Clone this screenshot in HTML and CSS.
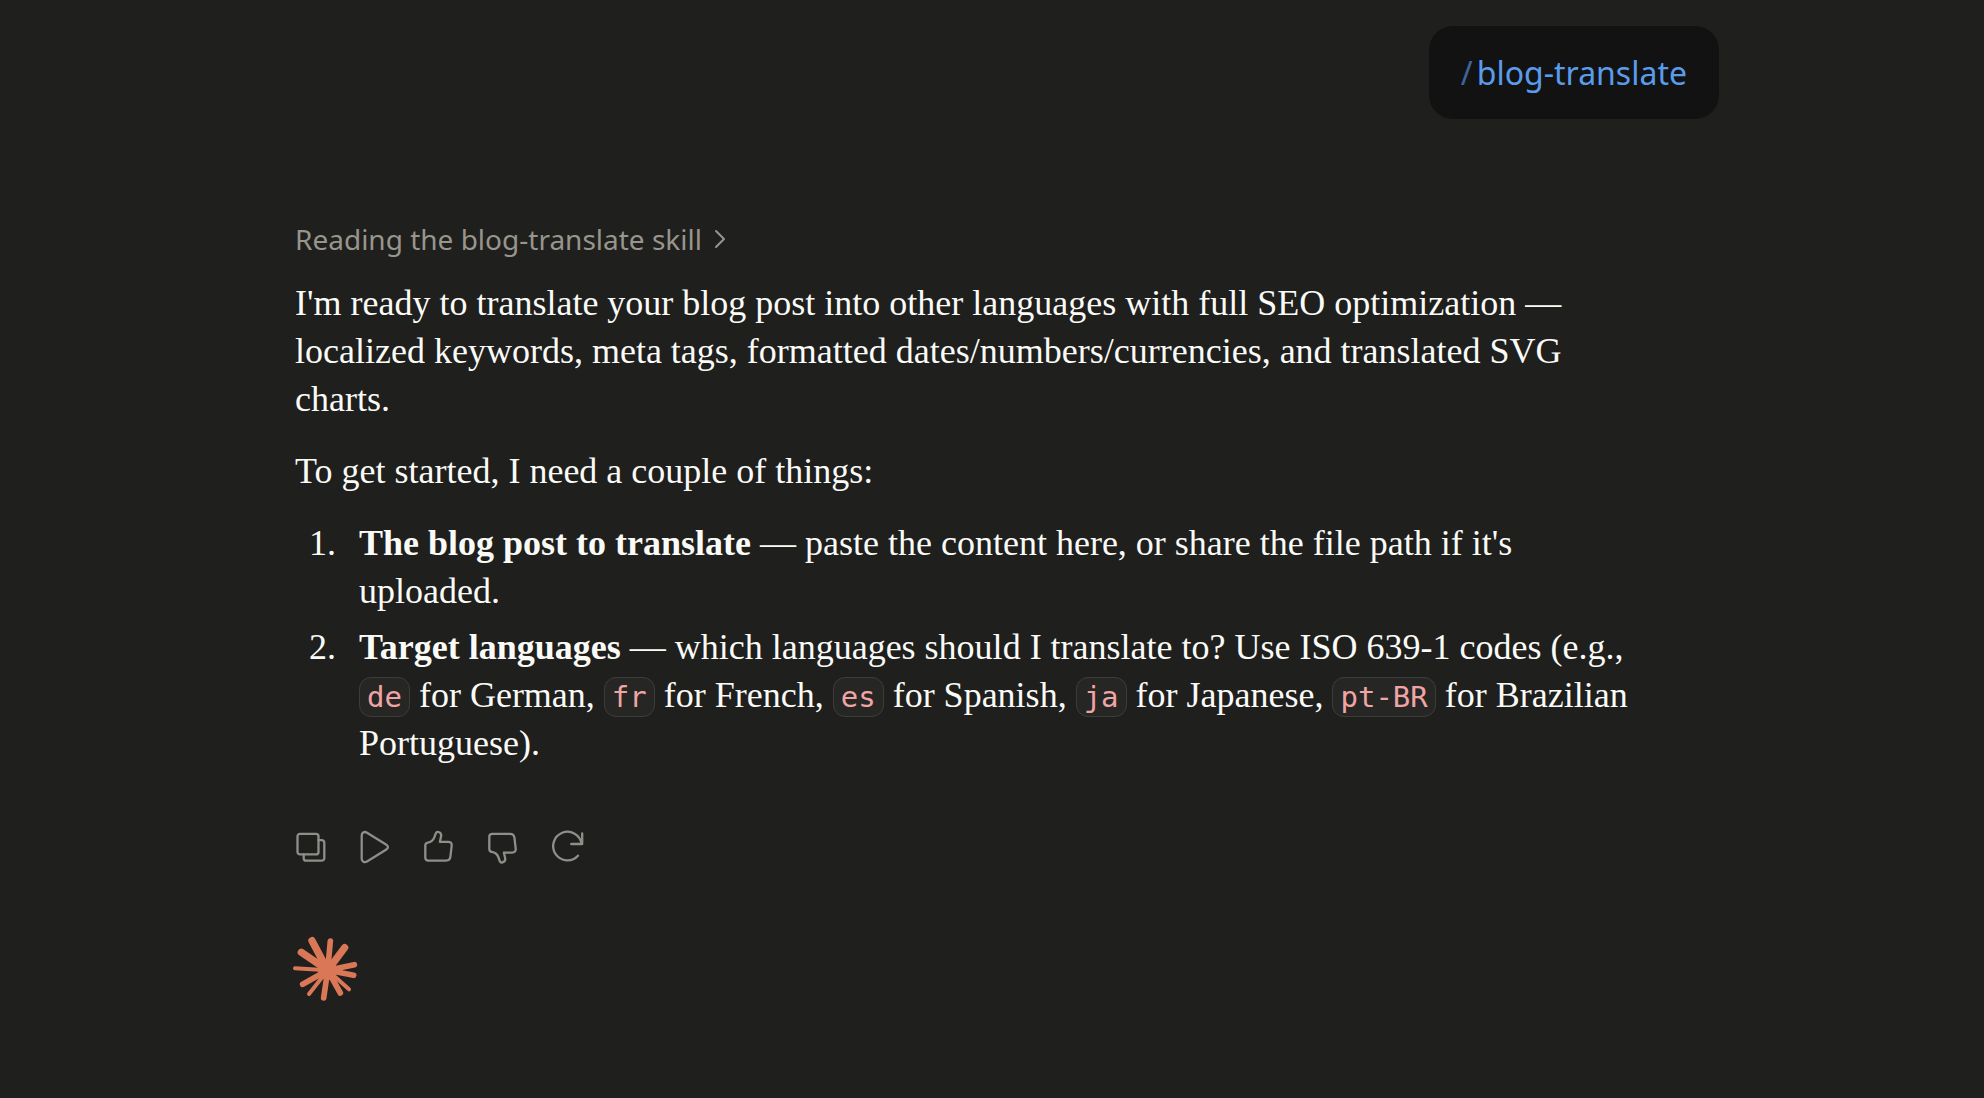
FILE: index.html
```html
<!DOCTYPE html>
<html lang="en">
<head>
<meta charset="utf-8">
<meta name="viewport" content="width=device-width, initial-scale=1">
<title>Chat</title>
<link rel="stylesheet" href="styles.css">
</head>
<body>
<main class="thread">
  <div class="prompt"><span class="slash">/</span>blog-translate</div>
  <article class="reply">
    <button class="step" type="button">Reading the blog-translate skill
      <svg class="chevron" viewBox="0 0 12 20" aria-hidden="true"><path d="M2 2l8 8-8 8"/></svg>
    </button>
    <div class="prose">
      <p>I'm ready to translate your blog post into other languages with full SEO optimization — localized keywords, meta tags, formatted dates/numbers/currencies, and translated SVG charts.</p>
      <p>To get started, I need a couple of things:</p>
      <ol>
        <li><strong>The blog post to translate</strong> — paste the content here, or share the file path if it's uploaded.</li>
        <li><strong>Target languages</strong> — which languages should I translate to? Use ISO 639-1 codes (e.g., <code>de</code> for German, <code>fr</code> for French, <code>es</code> for Spanish, <code>ja</code> for Japanese, <code>pt-BR</code> for Brazilian Portuguese).</li>
      </ol>
    </div>
    <div class="actions">
      <button type="button" aria-label="Copy"><svg viewBox="0 0 32 32"><rect x="2.5" y="2.8" width="21" height="20.6" rx="2.5"/><path d="M23.5 9.2h3.3a2.5 2.5 0 0 1 2.5 2.5v15.5a2.5 2.5 0 0 1-2.5 2.5H11.2a2.5 2.5 0 0 1-2.5-2.5v-3.8"/></svg></button>
      <button type="button" aria-label="Read aloud"><svg viewBox="0 0 32 32"><path d="M2.7 4.500c0-3 2.800-4.400 5.300-2.800l19 11.700c2.600 1.600 2.600 3.800 0 5.400L8 30.500c-2.500 1.500-5.300.1-5.300-2.800z"/></svg></button>
      <button type="button" aria-label="Good response"><svg viewBox="0 0 32 32"><path d="M2.300 14.500c0-1.800.8-2.700 2.500-2.900 3-.4 5.400-2.300 6.500-5.200l1.500-4.100c.5-1.300 1.400-1.700 2.700-1.300 2 .6 3 2.300 2.600 4.300l-1.200 5.500h8.300c2.400 0 3.800 1.500 3.500 3.900l-1.300 11c-.3 2.500-1.800 3.900-4.300 3.900H5.300c-2 0-3-1-3-3z"/></svg></button>
      <button type="button" aria-label="Bad response"><svg viewBox="0 0 32 32"><path d="M2.300 17.900c0 1.800.8 2.700 2.500 2.900 3 .4 5.400 2.300 6.500 5.200l1.500 4.100c.5 1.300 1.400 1.700 2.700 1.300 2-.6 3-2.300 2.600-4.300l-1.200-5.500h8.300c2.400 0 3.800-1.500 3.500-3.900l-1.300-11c-.3-2.500-1.800-3.900-4.300-3.900H5.300c-2 0-3 1-3 3z"/></svg></button>
      <button type="button" aria-label="Retry"><svg viewBox="0 0 32 32"><path d="M27 24.700A14.300 14.300 0 1 1 30.600 13M31.200 2.500V13H20.200"/></svg></button>
    </div>
  </article>
  <svg class="spark" viewBox="45 48 192 192" role="img" aria-label="Assistant">
    <g stroke-width="22"><path d="M143 148L96 59M143 148L194 80M143 148L64 94"/></g>
    <g stroke-width="17"><path d="M143 148L151 60M143 148L223 131M143 148L221 163M143 148L181 216M143 148L131 231M143 148L68 190"/></g>
    <g stroke-width="12"><path d="M143 148L87 219M143 148L45 142M143 148L207 205"/></g>
    <circle cx="143" cy="148" r="29"/>
  </svg>
</main>
</body>
</html>
```
FILE: styles.css
```css
body {
  margin: 0;
  background: #1f1f1d;
  color: #fafaf7;
}

.thread {
  display: flex;
  flex-direction: column;
  padding: 26px 265px 80px 295px;
}

.prompt {
  align-self: flex-end;
  padding: 24px 32px;
  border-radius: 24px;
  background: #121212;
  color: #5a9cec;
  font: 32px/45px "Noto Sans", sans-serif;
}

.slash {
  margin-right: 4px;
  opacity: 0.6;
}

.reply {
  margin-top: 100px;
  padding-right: 80px;
}

button {
  padding: 0;
  border: 0;
  background: none;
  color: #97958c;
  cursor: pointer;
}

.step {
  display: flex;
  align-items: center;
  gap: 12px;
  font: 28px/40px "Noto Sans", sans-serif;
}

svg {
  display: block;
  overflow: visible;
  fill: none;
  stroke: currentColor;
  stroke-width: 2;
  stroke-linecap: round;
  stroke-linejoin: round;
}

.chevron {
  width: 12px;
  height: 20px;
}

.prose {
  margin-top: 20px;
  font: 36px/48px "Liberation Serif", serif;
}

.prose p {
  margin: 0 0 24px;
}

.prose ol {
  display: flex;
  flex-direction: column;
  gap: 8px;
  margin: 0;
  padding-left: 50px;
}

.prose li {
  padding-left: 14px;
}

.prose code {
  padding: 2px 7px;
  border: 1px solid #3c3c3a;
  border-radius: 12px;
  background: #262625;
  color: #f0a4a4;
  font: 29px/36px "DejaVu Sans Mono", monospace;
}

.actions {
  display: flex;
  gap: 32px;
  margin-top: 64px;
  color: #8f8e8a;
}

.actions svg {
  width: 32px;
  height: 32px;
  stroke-width: 2.3;
}

.actions button {
  color: inherit;
}

.spark {
  width: 64px;
  height: 64px;
  margin-top: 74px;
  color: #d97757;
}

.spark circle {
  fill: currentColor;
  stroke: none;
}
```
